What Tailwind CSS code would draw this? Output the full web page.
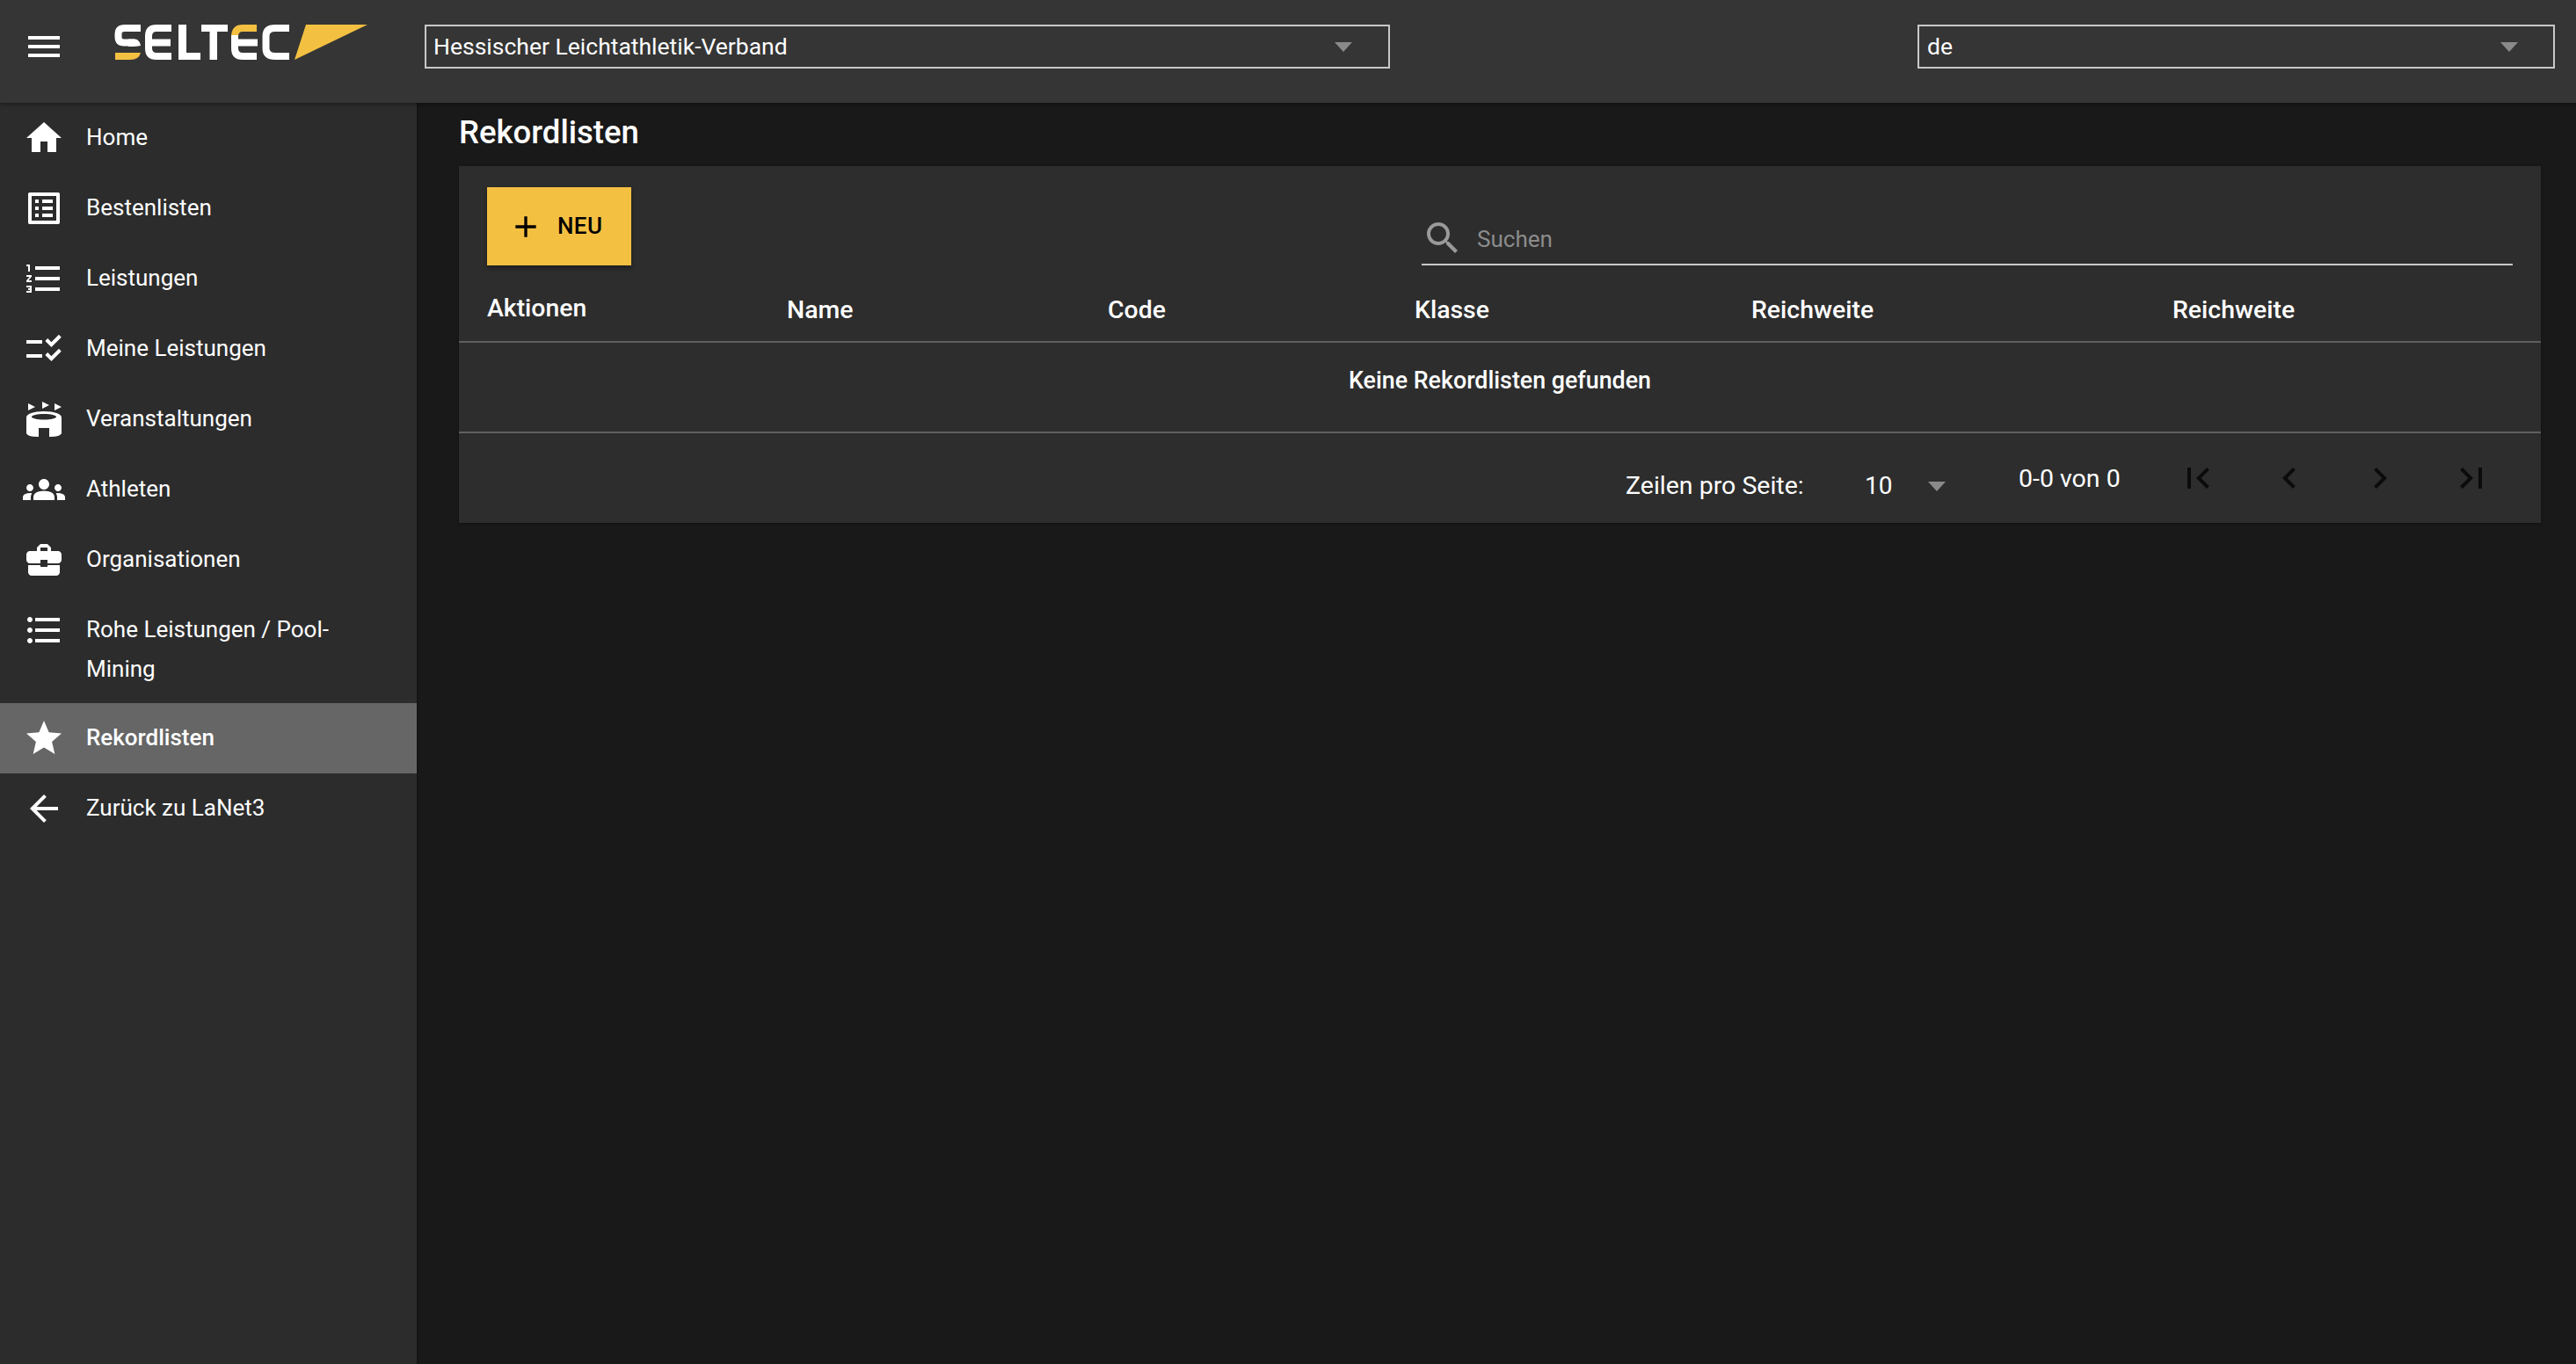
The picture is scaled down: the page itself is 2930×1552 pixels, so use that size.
<!DOCTYPE html>
<html lang="de">
<head>
<meta charset="utf-8">
<title>Rekordlisten</title>
<script src="https://cdn.jsdelivr.net/npm/@tailwindcss/browser@4"></script>
</head>
<body class="m-0 bg-[#191919] font-['Roboto',sans-serif] text-white">
<div class="flex flex-col h-[1552px] w-[2930px] overflow-hidden">
  <header class="relative z-10 flex h-[117px] shrink-0 items-start bg-[#353535] shadow-[0_2px_4px_rgba(0,0,0,0.35)]">
    <svg class="ml-[26px] mt-[29px] h-[48px] w-[48px] fill-white" viewBox="0 0 24 24"><path d="M3 18h18v-2H3v2zm0-5h18v-2H3v2zm0-7v2h18V6H3z"/></svg>
    <svg class="ml-[54px] mt-[26px] h-[44px] w-[292px]" viewBox="128 26 292 44" fill="none" stroke-width="8">
      <path d="M160 32H142Q134.500 32 134.500 39V41.500Q134.500 48.500 141 48.500H153" stroke="#fff"/>
      <path d="M146 44.500H154Q159 45.500 160 52Q155 53 150 53H146Z" fill="#fff" stroke="none"/>
      <path d="M131 60H160Q158 68 148 68H131Z" fill="#f4c042" stroke="none"/>
      <path d="M195 32H178Q169 32 169 41V55Q169 64 178 64H195" stroke="#fff"/>
      <path d="M170 48.500H194" stroke="#fff"/>
      <rect x="203" y="28" width="9" height="40" fill="#fff" stroke="none"/>
      <rect x="203" y="60" width="25" height="8" fill="#fff" stroke="none"/>
      <rect x="229" y="28" width="30" height="8" fill="#fff" stroke="none"/>
      <rect x="238.500" y="28" width="8.500" height="40" fill="#fff" stroke="none"/>
      <path d="M292 32H276Q267.500 32 267 41" stroke="#f4c042"/>
      <path d="M267 40V55Q267 64 276 64H292" stroke="#fff"/>
      <path d="M268 48.500H293" stroke="#fff"/>
      <path d="M329 32H313Q302.500 32 302.500 41V55Q302.500 64 313 64H329" stroke="#fff"/>
      <path d="M348 28H418L335 68Z" fill="#f4c042" stroke="none"/>
    </svg>
    <div class="ml-[63px] mt-[28px] flex h-[50px] w-[1098px] items-center justify-between border-2 border-[#c8c8c8] pl-[8px] pr-[41px] text-[26.500px]">
      <span>Hessischer Leichtathletik-Verband</span>
      <span class="h-0 w-0 border-x-[10px] border-t-[11px] border-x-transparent border-t-[#8a8a8a]"></span>
    </div>
    <div class="ml-auto mr-[24px] mt-[28px] flex h-[50px] w-[725px] items-center justify-between border-2 border-[#c8c8c8] pl-[9px] pr-[40px] text-[26.500px]">
      <span>de</span>
      <span class="h-0 w-0 border-x-[10px] border-t-[11px] border-x-transparent border-t-[#8a8a8a]"></span>
    </div>
  </header>

  <div class="flex min-h-0 flex-1">
    <nav class="w-[474px] shrink-0 bg-[#2c2c2c] text-[26px] leading-[45px] shadow-[1px_0_2px_rgba(0,0,0,0.3)]">
      <a class="flex h-[80px] items-center pl-[26px]"><svg class="mr-[24px] h-[48px] w-[48px] fill-white" viewBox="0 0 24 24"><path d="M10 20v-6h4v6h5v-8h3L12 3 2 12h3v8z"/></svg><span class="pb-[2px]">Home</span></a>
      <a class="flex h-[80px] items-center pl-[26px]"><svg class="mr-[24px] h-[48px] w-[48px] fill-white" viewBox="0 0 24 24"><path d="M19 5v14H5V5h14m1.100-2H3.900c-.5 0-.9.4-.9.9v16.200c0 .4.4.9.9.9h16.200c.4 0 .9-.5.9-.9V3.900c0-.5-.5-.9-.9-.9zM11 7h6v2h-6V7zm0 4h6v2h-6v-2zm0 4h6v2h-6zM7 7h2v2H7zm0 4h2v2H7zm0 4h2v2H7z"/></svg><span class="pb-[2px]">Bestenlisten</span></a>
      <a class="flex h-[80px] items-center pl-[26px]"><svg class="mr-[24px] h-[48px] w-[48px] fill-white" viewBox="0 0 24 24"><path d="M2 17h2v.5H3v1h1v.5H2v1h3v-4H2v1zm1-9h1V4H2v1h1v3zm-1 3h1.800L2 13.100v.9h3v-1H3.200L5 10.900V10H2v1zm5-6v2h14V5H7zm0 14h14v-2H7v2zm0-6h14v-2H7v2z"/></svg><span class="pb-[2px]">Leistungen</span></a>
      <a class="flex h-[80px] items-center pl-[26px]"><svg class="mr-[24px] h-[48px] w-[48px] fill-white" viewBox="0 0 24 24"><path d="M11 7H2v2h9V7zM11 15H2v2h9v-2zM16.230 11l-3.540-3.540 1.410-1.410 2.120 2.120 4.240-4.240 1.410 1.410L16.230 11zM16.230 19l-3.540-3.540 1.410-1.410 2.120 2.120 4.240-4.240 1.410 1.410L16.230 19z"/></svg><span class="pb-[2px]">Meine Leistungen</span></a>
      <a class="flex h-[80px] items-center pl-[26px]"><svg class="mr-[24px] h-[48px] w-[48px] fill-white" viewBox="0 0 24 24"><path d="M3 3v4l4-2zM11 2v4l4-2zM18 3v4l4-2z"/><path fill-rule="evenodd" d="M12 7.500c5.800 0 10 1.500 10 3.500v8.700c0 1-1.700 1.800-4 2.200L15 22v-5H9v5l-3-.1c-2.300-.4-4-1.200-4-2.200V11c0-2 4.200-3.500 10-3.500zM12 9c-3.900 0-7 .7-7 1.600s3.100 1.600 7 1.600 7-.7 7-1.600S15.900 9 12 9z"/></svg><span class="pb-[2px]">Veranstaltungen</span></a>
      <a class="flex h-[80px] items-center pl-[26px]"><svg class="mr-[24px] h-[48px] w-[48px] fill-white" viewBox="0 0 24 24"><path d="M4 13c1.100 0 2-.9 2-2s-.9-2-2-2-2 .9-2 2 .9 2 2 2zm1.130 1.100c-.37-.06-.74-.1-1.130-.1-.99 0-1.930.21-2.780.58C.48 14.900 0 15.620 0 16.430V18h4.500v-1.610c0-.83.23-1.610.63-2.290zM20 13c1.100 0 2-.9 2-2s-.9-2-2-2-2 .9-2 2 .9 2 2 2zm4 3.430c0-.81-.48-1.530-1.220-1.850-.85-.37-1.790-.58-2.780-.58-.39 0-.76.04-1.130.1.4.68.63 1.460.63 2.290V18H24v-1.570zm-7.760-2.780c-1.170-.52-2.610-.9-4.240-.9-1.630 0-3.070.39-4.240.9C6.680 14.130 6 15.210 6 16.390V18h12v-1.610c0-1.180-.68-2.260-1.760-2.740zM12 12c1.660 0 3-1.340 3-3s-1.340-3-3-3-3 1.340-3 3 1.340 3 3 3z"/></svg><span class="pb-[2px]">Athleten</span></a>
      <a class="flex h-[80px] items-center pl-[26px]"><svg class="mr-[24px] h-[48px] w-[48px] fill-white" viewBox="0 0 24 24"><path d="M10 16v-1H3.010L3 19c0 1.110.89 2 2 2h14c1.110 0 2-.89 2-2v-4h-7v1h-4zm10-9h-4.010V5l-2-2h-4l-2 2v2H4c-1.100 0-2 .9-2 2v3c0 1.110.89 2 2 2h6v-2h4v2h6c1.100 0 2-.9 2-2V9c0-1.100-.9-2-2-2zm-6 0h-4V5h4v2z"/></svg><span class="pb-[2px]">Organisationen</span></a>
      <a class="flex h-[123px] items-start pl-[26px] pt-[16px]"><svg class="mr-[24px] h-[48px] w-[48px] shrink-0 fill-white" viewBox="0 0 24 24"><path d="M4 10.500c-.83 0-1.500.67-1.500 1.500s.67 1.500 1.500 1.500 1.500-.67 1.500-1.500-.67-1.500-1.500-1.500zm0-6c-.83 0-1.500.67-1.500 1.500S3.170 7.500 4 7.500 5.500 6.830 5.500 6 4.830 4.500 4 4.500zm0 12c-.83 0-1.500.68-1.500 1.500s.68 1.500 1.500 1.500 1.500-.68 1.500-1.500-.67-1.500-1.500-1.500zM7 19h14v-2H7v2zm0-6h14v-2H7v2zm0-8v2h14V5H7z"/></svg><span class="w-[340px] pt-px">Rohe Leistungen / Pool-Mining</span></a>
      <a class="flex h-[80px] items-center bg-[#666666] pl-[26px] font-medium"><svg class="mr-[24px] h-[48px] w-[48px] fill-white" viewBox="0 0 24 24"><path d="M12 17.270L18.180 21l-1.640-7.030L22 9.240l-7.190-.61L12 2 9.190 8.630 2 9.240l5.460 4.730L5.820 21z"/></svg><span class="pb-[2px]">Rekordlisten</span></a>
      <a class="flex h-[80px] items-center pl-[26px]"><svg class="mr-[24px] h-[48px] w-[48px] fill-white" viewBox="0 0 24 24"><path d="M20 11H7.830l5.590-5.590L12 4l-8 8 8 8 1.410-1.410L7.830 13H20v-2z"/></svg><span class="pb-[2px]">Zurück zu LaNet3</span></a>
    </nav>

    <main class="min-w-0 flex-1 pl-[48px] pr-[40px]">
      <h1 class="m-0 h-[72px] pt-[12px] text-[36.500px] font-medium leading-[44px]">Rekordlisten</h1>
      <section class="h-[406px] bg-[#2d2d2d] shadow-[0_1px_3px_rgba(0,0,0,0.4)]">
        <div class="flex items-end justify-between pl-[32px] pr-[32px] pt-[24px]">
          <button class="flex h-[89px] w-[164px] items-center bg-[#f4c042] pl-[24px] text-[26px] font-medium tracking-[0.4px] text-black shadow-[0_3px_5px_rgba(0,0,0,0.35)]">
            <svg class="mr-[17px] h-[40px] w-[40px] fill-black" viewBox="0 0 24 24"><path d="M19 13h-6v6h-2v-6H5v-2h6V5h2v6h6v2z"/></svg><span class="-ml-px">NEU</span>
          </button>
          <div class="flex h-[60px] w-[1241px] items-center border-b-2 border-[#c8c8c8] text-[26px] text-[#8c8c8c]">
            <svg class="mr-[15px] h-[48px] w-[48px] fill-[#9a9a9a]" viewBox="0 0 24 24"><path d="M15.500 14h-.79l-.28-.27C15.410 12.590 16 11.110 16 9.500 16 5.910 13.090 3 9.500 3S3 5.910 3 9.500 5.910 16 9.500 16c1.610 0 3.090-.59 4.230-1.570l.27.28v.79l5 4.990L20.490 19l-4.990-5zm-6 0C7.010 14 5 11.990 5 9.500S7.010 5 9.500 5 14 7.010 14 9.500 11.990 14 9.500 14z"/></svg><span class="pt-[2px]">Suchen</span>
          </div>
        </div>
        <div class="grid h-[88px] grid-cols-[341px_365px_349px_383px_479px_1fr] border-b-2 border-[#5f5f5f] pl-[32px] pt-[33px] text-[28.400px] font-medium leading-[36px]">
          <span class="-mt-[2px]">Aktionen</span><span>Name</span><span>Code</span><span>Klasse</span><span>Reichweite</span><span>Reichweite</span>
        </div>
        <div class="h-[103px] border-b-2 border-[#5f5f5f] pt-[27px] text-center text-[26.800px] font-medium leading-[32px]">Keine Rekordlisten gefunden</div>
        <div class="flex items-start pl-[1327px] text-[28.500px] leading-[36px]">
          <span class="mt-[42px] w-[272px]">Zeilen pro Seite:</span>
          <span class="mt-[42px] w-[72px] text-[28px]">10</span>
          <span class="mt-[55px] h-0 w-0 border-x-[10px] border-t-[11px] border-x-transparent border-t-[#8a8a8a]"></span>
          <span class="ml-[83px] mt-[34px] w-[180px]">0-0 von 0</span>
          <div class="mt-[27px] flex gap-[55.500px]">
            <svg class="h-[48px] w-[48px] fill-[#0b0b0b]" viewBox="0 0 24 24"><path d="M18.410 16.590L13.820 12l4.590-4.590L17 6l-6 6 6 6zM6 6h2v12H6z"/></svg>
            <svg class="h-[48px] w-[48px] fill-[#0b0b0b]" viewBox="0 0 24 24"><path d="M15.410 7.410L14 6l-6 6 6 6 1.410-1.410L10.830 12z"/></svg>
            <svg class="h-[48px] w-[48px] fill-[#0b0b0b]" viewBox="0 0 24 24"><path d="M10 6L8.590 7.410 13.170 12l-4.580 4.590L10 18l6-6z"/></svg>
            <svg class="h-[48px] w-[48px] fill-[#0b0b0b]" viewBox="0 0 24 24"><path d="M5.590 7.410L10.180 12l-4.590 4.590L7 18l6-6-6-6zM16 6h2v12h-2z"/></svg>
          </div>
        </div>
      </section>
    </main>
  </div>
</div>
</body>
</html>
